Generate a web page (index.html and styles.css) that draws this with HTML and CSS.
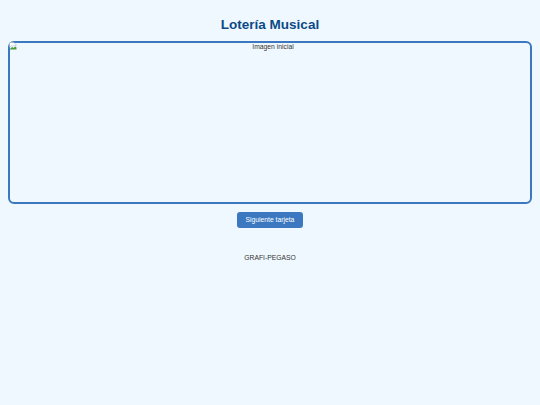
FILE: index.html
```html
<!DOCTYPE html>
<html lang="es">
<head>
<meta charset="utf-8">
<title>Lotería Musical</title>
<link rel="stylesheet" href="styles.css">
</head>
<body>
  <main class="page">
    <h1 class="title">Lotería Musical</h1>
    <div class="card-frame">
      <div class="broken">
        <svg class="broken-icon" width="8" height="8" viewBox="0 0 16 16">
          <path d="M1 1h9l4 4v3l-3-2-3 3-3-2-4 3z" fill="#fff" stroke="#9aa" stroke-width="1"/>
          <path d="M2 14l4-4 3 2 3-3 3 2v4H2z" fill="#4a9a3a"/>
        </svg>
        <span class="alt">Imagen inicial</span>
      </div>
    </div>
    <button class="next-btn">Siguiente tarjeta</button>
    <footer class="footer">GRAFI-PEGASO</footer>
  </main>
</body>
</html>
```
FILE: styles.css
```css
html, body {
  margin: 0;
  padding: 0;
  background: #f0f8ff;
  font-family: "Liberation Sans", Arial, sans-serif;
}
.page {
  display: flex;
  flex-direction: column;
  align-items: center;
  padding: 0 8px;
}
.title {
  margin: 17px 0 8px;
  font-size: 13.5px;
  line-height: 16px;
  font-weight: bold;
  color: #0b4a86;
}
.card-frame {
  box-sizing: border-box;
  width: 100%;
  height: 163px;
  border: 2.5px solid #3b78bf;
  border-radius: 6px;
}
.broken {
  position: relative;
  text-align: center;
  padding-left: 6px;
  font-size: 6.75px;
  line-height: 7px;
  color: #333;
}
.broken-icon {
  position: absolute;
  left: -1px;
  top: -1px;
}
.alt {
  display: inline-block;
}
.next-btn {
  margin-top: 8px;
  height: 16px;
  width: 66px;
  padding: 0;
  border: none;
  border-radius: 3px;
  background: #3b78bf;
  color: #fff;
  font-family: "Liberation Sans", Arial, sans-serif;
  font-size: 6.75px;
  line-height: 16px;
}
.footer {
  margin-top: 26px;
  font-size: 6.75px;
  line-height: 8px;
  color: #333;
}
```
